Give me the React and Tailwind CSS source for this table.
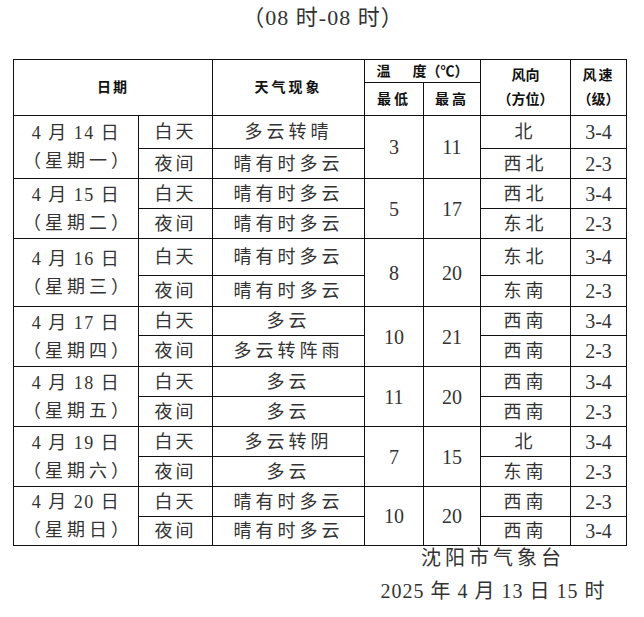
import React from 'react';

const days = [
  { date: '4 月 14 日', week: '（星期一）', day: '多云转晴', night: '晴有时多云', low: '3', high: '11', dir: ['北', '西北'], speed: ['3-4', '2-3'], h: [33, 30] },
  { date: '4 月 15 日', week: '（星期二）', day: '晴有时多云', night: '晴有时多云', low: '5', high: '17', dir: ['西北', '东北'], speed: ['3-4', '2-3'], h: [30, 30] },
  { date: '4 月 16 日', week: '（星期三）', day: '晴有时多云', night: '晴有时多云', low: '8', high: '20', dir: ['东北', '东南'], speed: ['3-4', '2-3'], h: [37, 31] },
  { date: '4 月 17 日', week: '（星期四）', day: '多云', night: '多云转阵雨', low: '10', high: '21', dir: ['西南', '西南'], speed: ['3-4', '2-3'], h: [29, 31] },
  { date: '4 月 18 日', week: '（星期五）', day: '多云', night: '多云', low: '11', high: '20', dir: ['西南', '西南'], speed: ['3-4', '2-3'], h: [30, 30] },
  { date: '4 月 19 日', week: '（星期六）', day: '多云转阴', night: '多云', low: '7', high: '15', dir: ['北', '东南'], speed: ['3-4', '2-3'], h: [30, 30] },
  { date: '4 月 20 日', week: '（星期日）', day: '晴有时多云', night: '晴有时多云', low: '10', high: '20', dir: ['西南', '西南'], speed: ['2-3', '3-4'], h: [30, 29] },
];

const font = { fontFamily: '"Liberation Serif", "Noto Sans CJK SC", serif' };

const td = 'border border-[#111] text-center align-middle p-0 leading-[24px]';
const th = 'border border-[#111] text-center align-middle p-0 font-bold text-[14px] text-[#111]';

export default function App() {
  return (
    <div className="w-[644px] h-[617px] bg-white text-[#333]" style={font}>
      {/* title */}
      <div className="h-[36px] leading-[36px] text-center text-[22px] tracking-[1px] pl-[2px]">（08 时-08 时）</div>

      <table className="mt-[23px] ml-[13px] w-[613px] border-collapse table-fixed">
        <colgroup>
          <col className="w-[125px]" />
          <col className="w-[74px]" />
          <col className="w-[152px]" />
          <col className="w-[59px]" />
          <col className="w-[57px]" />
          <col className="w-[90px]" />
          <col className="w-[56px]" />
        </colgroup>
        <thead>
          <tr className="h-[23px]">
            <th className={th} colSpan={2} rowSpan={2}><span className="tracking-[2px]">日期</span></th>
            <th className={th} rowSpan={2}><span className="tracking-[3px]">天气现象</span></th>
            <th className={th} colSpan={2}><span className="leading-[20px]">温<span className="inline-block w-[22px]"></span>度（℃）</span></th>
            <th className={th} rowSpan={2}>
              <div className="leading-[24px]">风向</div>
              <div className="leading-[24px]">（方位）</div>
            </th>
            <th className={th} rowSpan={2}>
              <div className="leading-[24px] tracking-[2px]">风速</div>
              <div className="leading-[24px]">（级）</div>
            </th>
          </tr>
          <tr className="h-[33px]">
            <th className={th}><span className="tracking-[3px]">最低</span></th>
            <th className={th}><span className="tracking-[3px]">最高</span></th>
          </tr>
        </thead>
        <tbody className="text-[18px]">
          {days.map((d) => (
            <React.Fragment key={d.date}>
              <tr style={{ height: d.h[0] }}>
                <td className={td} rowSpan={2}>
                  <div className="leading-[28px] tracking-[1.5px]">{d.date}</div>
                  <div className="leading-[28px] tracking-[4px] pl-[4px]">{d.week}</div>
                </td>
                <td className={td}><span className="tracking-[3px]">白天</span></td>
                <td className={td}><span className="tracking-[4px]">{d.day}</span></td>
                <td className={`${td} text-[20px]`} rowSpan={2}>{d.low}</td>
                <td className={`${td} text-[20px]`} rowSpan={2}>{d.high}</td>
                <td className={td}><span className="tracking-[4px]">{d.dir[0]}</span></td>
                <td className={`${td} text-[20px]`}>{d.speed[0]}</td>
              </tr>
              <tr style={{ height: d.h[1] }}>
                <td className={td}><span className="tracking-[3px]">夜间</span></td>
                <td className={td}><span className="tracking-[4px]">{d.night}</span></td>
                <td className={td}><span className="tracking-[4px]">{d.dir[1]}</span></td>
                <td className={`${td} text-[20px]`}>{d.speed[1]}</td>
              </tr>
            </React.Fragment>
          ))}
        </tbody>
      </table>

      {/* issuer */}
      <div className="ml-[363px] w-[260px] flex flex-col items-center text-[20px]">
        <div className="leading-[24px] tracking-[4px]">沈阳市气象台</div>
        <div className="mt-[9px] leading-[24px] tracking-[1px]">2025 年 4 月 13 日 15 时</div>
      </div>
    </div>
  );
}
